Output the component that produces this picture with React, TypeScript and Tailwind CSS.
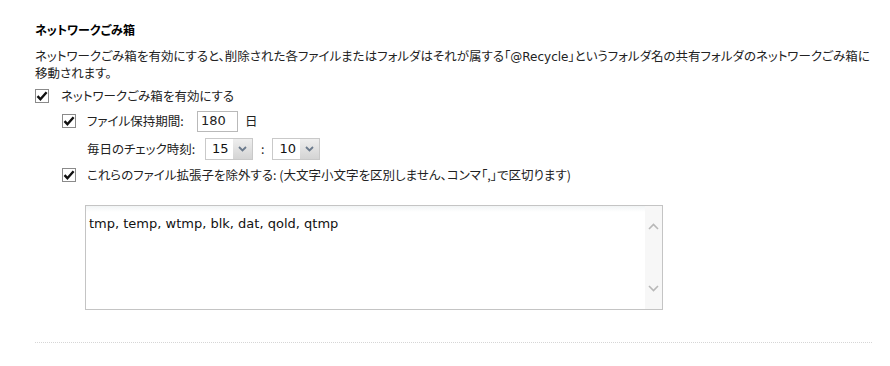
import React from "react";

const jp = "font-['Noto_Sans_CJK_JP',sans-serif] [font-feature-settings:'palt']";
const latin = "font-['DejaVu_Sans','Noto_Sans_CJK_JP',sans-serif]";

function Check() {
  return (
    <span className="flex h-[14px] w-[14px] shrink-0 items-center justify-center border border-[#8a8a8a] bg-white">
      <svg width="12" height="12" viewBox="0 0 12 12">
        <path d="M1.5 6.2 L4.4 9.2 L10.6 2.2" fill="none" stroke="#111" strokeWidth="2.4" />
      </svg>
    </span>
  );
}

function Select({ value }: { value: string }) {
  return (
    <div className="flex h-[22px] w-[48px] border border-[#c9c9c9] bg-white">
      <span className={`flex-1 pl-[6px] text-[13px] leading-[20px] text-[#111] ${latin}`}>{value}</span>
      <span className="flex w-[19px] items-center justify-center bg-gradient-to-b from-[#eeeeee] to-[#d4d4d4]">
        <svg width="9" height="6" viewBox="0 0 9 6">
          <path d="M1 1 L4.5 4.5 L8 1" fill="none" stroke="#6b7a8c" strokeWidth="1.8" />
        </svg>
      </span>
    </div>
  );
}

export default function App() {
  return (
    <div className={`w-[890px] h-[366px] bg-white pl-[35px] pr-[14px] pt-[21px] text-[#222] ${jp}`}>
      <h2 className="text-[12px] font-bold leading-[18px] text-black">ネットワークごみ箱</h2>

      <p className="mt-[9px] text-[12.5px] leading-[16px]">
        ネットワークごみ箱を有効にすると、削除された各ファイルまたはフォルダはそれが属する「<span className={`${latin} text-[12px]`}>@Recycle</span>」というフォルダ名の共有フォルダのネットワークごみ箱に
        <br />
        移動されます。
      </p>

      <label className="mt-[6px] flex h-[18px] items-center gap-[12px] text-[12.5px]">
        <Check />
        <span>ネットワークごみ箱を有効にする</span>
      </label>

      <div className="pl-[27px]">
        <div className="mt-[4px] flex h-[24px] items-center text-[12.5px]">
          <Check />
          <span className="ml-[11px] w-[110px]">ファイル保持期間:</span>
          <span className={`flex h-[21px] w-[41px] items-center border border-[#b9b9b9] bg-white pl-[3px] text-[13px] ${latin}`}>180</span>
          <span className="ml-[7px]">日</span>
        </div>

        <div className="mt-[3px] flex h-[26px] items-center pl-[25px] text-[12.5px]">
          <span className="w-[118px]">毎日のチェック時刻:</span>
          <Select value="15" />
          <span className="mx-[8px]">:</span>
          <Select value="10" />
        </div>

        <label className="mt-[1px] flex h-[24px] items-center gap-[11px] text-[12.5px]">
          <Check />
          <span>これらのファイル拡張子を除外する: (大文字小文字を区別しません、コンマ「,」で区切ります)</span>
        </label>

        <div className="ml-[23px] mt-[18px] flex h-[105px] w-[578px] border border-[#c4c4c4] bg-white">
          <div className="flex-1 bg-gradient-to-b from-[#f1f4f5] to-white to-[6px] pl-[3px] pt-[3px]">
            <span className={`text-[13px] leading-[16px] text-[#111] ${latin}`}>tmp, temp, wtmp, blk, dat, qold, qtmp</span>
          </div>
          <div className="flex w-[17px] flex-col items-center justify-between bg-[#f7f7f7] py-[17px]">
            <svg width="11" height="7" viewBox="0 0 11 7">
              <path d="M1 6 L5.5 1.5 L10 6" fill="none" stroke="#b8b8b8" strokeWidth="1.6" />
            </svg>
            <svg width="11" height="7" viewBox="0 0 11 7">
              <path d="M1 1 L5.5 5.5 L10 1" fill="none" stroke="#b8b8b8" strokeWidth="1.6" />
            </svg>
          </div>
        </div>
      </div>

      <div className="mr-[4px] mt-[32px] border-t border-dotted border-[#d6d6d6]" />
    </div>
  );
}
